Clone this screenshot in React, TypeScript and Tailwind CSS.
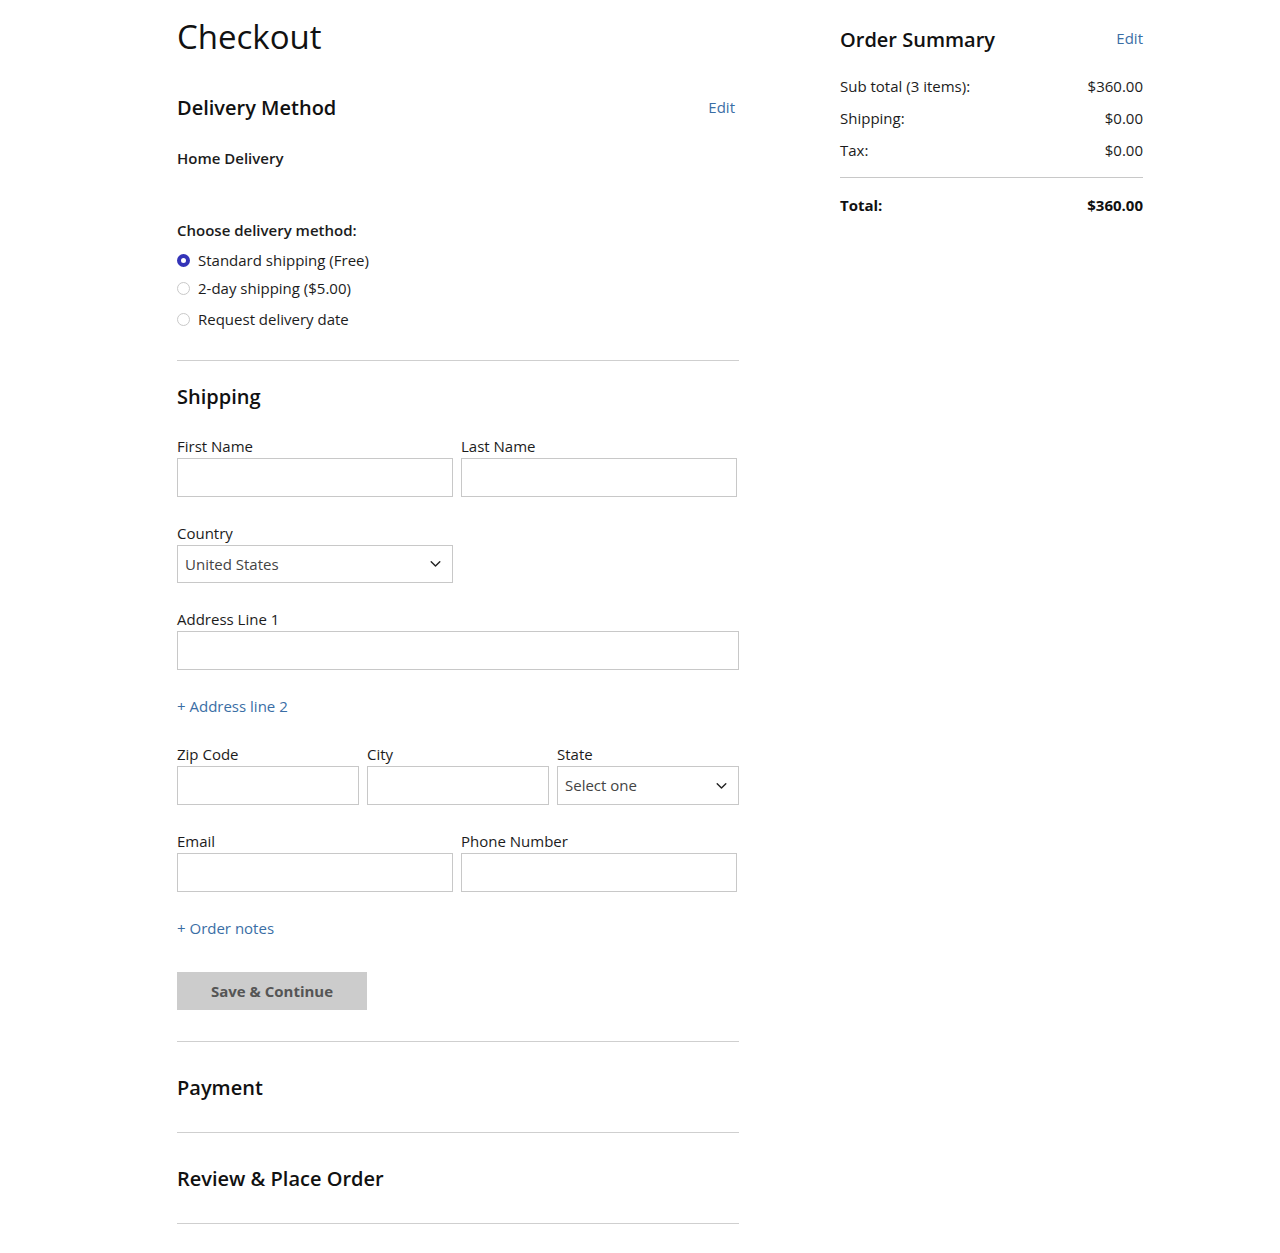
import React from "react";

const Chevron = () => (
  <svg width="11" height="7" viewBox="0 0 11 7" fill="none" className="absolute right-[11px] top-1/2 -translate-y-1/2">
    <path d="M1.2 1.2 L5.5 5.5 L9.8 1.2" stroke="#222" strokeWidth="1.4" strokeLinecap="round" strokeLinejoin="round" />
  </svg>
);

const Radio = ({ checked, label, className }: { checked?: boolean; label: string; className?: string }) => (
  <label className={`flex items-center h-[20px] ${className ?? ""}`}>
    {checked ? (
      <span className="w-[13px] h-[13px] rounded-full border-[4px] border-[#3434b8] bg-white box-border" />
    ) : (
      <span className="w-[13px] h-[13px] rounded-full border border-[#c9c9c9] bg-white box-border" />
    )}
    <span className="ml-[8px] text-[15px] text-[#1c1c1c]">{label}</span>
  </label>
);

const Field = ({ label, className }: { label: string; className?: string }) => (
  <div className={className}>
    <div className="text-[15px] leading-[20px] text-[#1c1c1c]">{label}</div>
    <div className="mt-[2px] h-[39px] border border-[#c8c8c8] bg-white" />
  </div>
);

const SelectField = ({ label, value, className }: { label: string; value: string; className?: string }) => (
  <div className={className}>
    <div className="text-[15px] leading-[20px] text-[#1c1c1c]">{label}</div>
    <div className="relative mt-[2px] h-[38px] border border-[#c8c8c8] bg-white flex items-center pl-[7px] text-[15px] text-[#444]">
      {value}
      <Chevron />
    </div>
  </div>
);

export default function App() {
  return (
    <div className="min-h-[1253px] bg-white text-[#1c1c1c]" style={{ fontFamily: '"Open Sans", "Noto Sans", sans-serif' }}>
      <div className="flex pl-[177px]">
        {/* Left column */}
        <div className="w-[562px]">
          <h1 className="pt-[15px] text-[33px] leading-[44px] font-normal text-[#111]">Checkout</h1>

          <div className="mt-[35px] flex items-center justify-between h-[28px]">
            <h2 className="text-[20px] leading-[28px] font-semibold text-[#111]">Delivery Method</h2>
            <a className="text-[15px] text-[#3a6ea5] mr-[4px] -mt-[2px]">Edit</a>
          </div>
          <div className="mt-[26px] text-[15px] leading-[20px] font-semibold">Home Delivery</div>
          <div className="mt-[52px] text-[15px] leading-[20px] font-semibold">Choose delivery method:</div>
          <Radio checked label="Standard shipping (Free)" className="mt-[10px]" />
          <Radio label="2-day shipping ($5.00)" className="mt-[8px]" />
          <Radio label="Request delivery date" className="mt-[11px]" />

          <div className="mt-[31px] border-t border-[#cfcfcf]" />

          <h2 className="mt-[22px] text-[20px] leading-[28px] font-semibold text-[#111]">Shipping</h2>

          <div className="mt-[25px] flex gap-[8px]">
            <Field label="First Name" className="w-[276px]" />
            <Field label="Last Name" className="w-[276px]" />
          </div>

          <SelectField label="Country" value="United States" className="mt-[26px] w-[276px]" />

          <Field label="Address Line 1" className="mt-[26px]" />

          <div className="mt-[26px] text-[15px] leading-[20px] text-[#3a6ea5]">+ Address line 2</div>

          <div className="mt-[28px] grid grid-cols-3 gap-[8px]">
            <Field label="Zip Code" />
            <Field label="City" />
            <div>
              <div className="text-[15px] leading-[20px] text-[#1c1c1c]">State</div>
              <div className="relative mt-[2px] h-[39px] border border-[#c8c8c8] bg-white flex items-center pl-[7px] text-[15px] text-[#444]">
                Select one
                <Chevron />
              </div>
            </div>
          </div>

          <div className="mt-[26px] flex gap-[8px]">
            <Field label="Email" className="w-[276px]" />
            <Field label="Phone Number" className="w-[276px]" />
          </div>

          <div className="mt-[26px] text-[15px] leading-[20px] text-[#3a6ea5]">+ Order notes</div>

          <button className="mt-[34px] w-[190px] h-[38px] bg-[#cccccc] text-[#555555] text-[15px] font-bold flex items-center justify-center">
            Save &amp; Continue
          </button>

          <div className="mt-[31px] border-t border-[#cfcfcf]" />
          <h2 className="mt-[32px] text-[20px] leading-[28px] font-semibold text-[#111]">Payment</h2>
          <div className="mt-[30px] border-t border-[#cfcfcf]" />
          <h2 className="mt-[32px] text-[20px] leading-[28px] font-semibold text-[#111]">Review &amp; Place Order</h2>
          <div className="mt-[30px] border-t border-[#cfcfcf]" />
        </div>

        {/* Right column */}
        <div className="ml-[101px] w-[303px]">
          <div className="mt-[26px] flex items-center justify-between h-[28px]">
            <h2 className="text-[20px] leading-[28px] font-semibold text-[#111]">Order Summary</h2>
            <a className="text-[15px] text-[#3a6ea5] -mt-[4px]">Edit</a>
          </div>
          <div className="mt-[22px] flex flex-col gap-[12px] text-[15px] leading-[20px] text-[#1c1c1c]">
            <div className="flex justify-between">
              <span>Sub total (3 items):</span>
              <span>$360.00</span>
            </div>
            <div className="flex justify-between">
              <span>Shipping:</span>
              <span>$0.00</span>
            </div>
            <div className="flex justify-between">
              <span>Tax:</span>
              <span>$0.00</span>
            </div>
          </div>
          <div className="mt-[17px] border-t border-[#c8c8c8]" />
          <div className="mt-[17px] flex justify-between text-[15px] leading-[20px] font-bold text-[#111]">
            <span>Total:</span>
            <span>$360.00</span>
          </div>
        </div>
      </div>
    </div>
  );
}
